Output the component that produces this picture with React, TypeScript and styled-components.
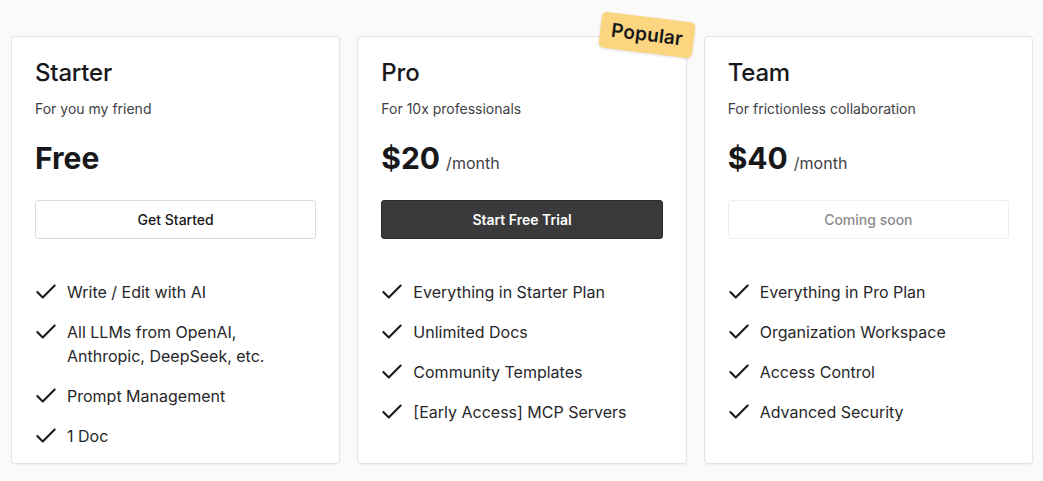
import React from "react";
import styled, { createGlobalStyle } from "styled-components";
import { Check } from "lucide-react";

const Global = createGlobalStyle`
  html, body { margin: 0; padding: 0; background: #fafafa; }
  body { font-family: Inter, "Noto Sans", sans-serif; color: #18181b; }
`;

const Page = styled.div`
  padding: 36px 10px 17px 11px;
  display: grid;
  grid-template-columns: repeat(3, 1fr);
  gap: 17px;
`;

const Card = styled.div`
  position: relative;
  background: #fff;
  border: 1px solid #e4e4e7;
  border-radius: 4px;
  box-shadow: 0 1px 2px rgba(0, 0, 0, 0.05);
  padding: 24px 23px 15px 23px;
  display: flex;
  flex-direction: column;
`;

const Title = styled.h2`
  margin: 0;
  font-size: 24px;
  line-height: 24px;
  font-weight: 500;
  letter-spacing: -0.2px;
`;

const Subtitle = styled.p`
  margin: 14px 0 0;
  font-size: 14px;
  line-height: 20px;
  color: #3f3f46;
`;

const PriceRow = styled.div`
  margin-top: 20px;
  display: flex;
  align-items: baseline;
  gap: 6px;
  height: 38px;
`;

const Price = styled.span`
  font-size: 30px;
  line-height: 38px;
  font-weight: 700;
`;

const Period = styled.span`
  font-size: 16px;
  color: #3f3f46;
`;

const Button = styled.button<{ $variant: "outline" | "solid" | "muted" }>`
  margin-top: 23px;
  height: 39px;
  width: 100%;
  border-radius: 3px;
  font-family: inherit;
  font-size: 14px;
  font-weight: ${(p) => (p.$variant === "solid" ? 600 : 500)};
  background: ${(p) => (p.$variant === "solid" ? "#3a3a3d" : "#fff")};
  color: ${(p) =>
    p.$variant === "solid" ? "#fff" : p.$variant === "muted" ? "#8a8a8f" : "#18181b"};
  border: 1px solid
    ${(p) =>
      p.$variant === "solid" ? "#2a2a2d" : p.$variant === "muted" ? "#efefef" : "#dcdcdf"};
  cursor: pointer;
`;

const Features = styled.ul`
  list-style: none;
  margin: 41px 0 0;
  padding: 0;
  display: flex;
  flex-direction: column;
  gap: 16px;
`;

const Feature = styled.li`
  display: flex;
  align-items: flex-start;
  gap: 8px;
  font-size: 16px;
  line-height: 24px;
  color: #27272a;
`;

const IconWrap = styled.span`
  flex: none;
  display: flex;
  align-items: center;
  justify-content: center;
  width: 26px;
  height: 24px;
  margin-left: -2px;
  color: #18181b;
`;

const Badge = styled.div`
  position: absolute;
  top: -20px;
  right: -8px;
  background: #fcd581;
  color: #18181b;
  font-size: 19px;
  font-weight: 600;
  padding: 6px 11px 7px;
  border-radius: 5px;
  transform: rotate(7deg);
  box-shadow: 0 1px 3px rgba(0, 0, 0, 0.12);
  letter-spacing: 0.2px;
`;

type Plan = {
  name: string;
  sub: string;
  price: string;
  period?: string;
  cta: string;
  variant: "outline" | "solid" | "muted";
  popular?: boolean;
  features: string[];
};

const plans: Plan[] = [
  {
    name: "Starter",
    sub: "For you my friend",
    price: "Free",
    cta: "Get Started",
    variant: "outline",
    features: [
      "Write / Edit with AI",
      "All LLMs from OpenAI, Anthropic, DeepSeek, etc.",
      "Prompt Management",
      "1 Doc",
    ],
  },
  {
    name: "Pro",
    sub: "For 10x professionals",
    price: "$20",
    period: "/month",
    cta: "Start Free Trial",
    variant: "solid",
    popular: true,
    features: [
      "Everything in Starter Plan",
      "Unlimited Docs",
      "Community Templates",
      "[Early Access] MCP Servers",
    ],
  },
  {
    name: "Team",
    sub: "For frictionless collaboration",
    price: "$40",
    period: "/month",
    cta: "Coming soon",
    variant: "muted",
    features: [
      "Everything in Pro Plan",
      "Organization Workspace",
      "Access Control",
      "Advanced Security",
    ],
  },
];

const FeatureText = styled.span`
  max-width: 215px;
`;

export default function App() {
  return (
    <>
      <Global />
      <Page>
        {plans.map((p) => (
          <Card key={p.name}>
            {p.popular && <Badge>Popular</Badge>}
            <Title>{p.name}</Title>
            <Subtitle>{p.sub}</Subtitle>
            <PriceRow>
              <Price>{p.price}</Price>
              {p.period && <Period>{p.period}</Period>}
            </PriceRow>
            <Button $variant={p.variant}>{p.cta}</Button>
            <Features>
              {p.features.map((f) => (
                <Feature key={f}>
                  <IconWrap>
                    <Check size={26} strokeWidth={1.9} />
                  </IconWrap>
                  <FeatureText>{f}</FeatureText>
                </Feature>
              ))}
            </Features>
          </Card>
        ))}
      </Page>
    </>
  );
}
